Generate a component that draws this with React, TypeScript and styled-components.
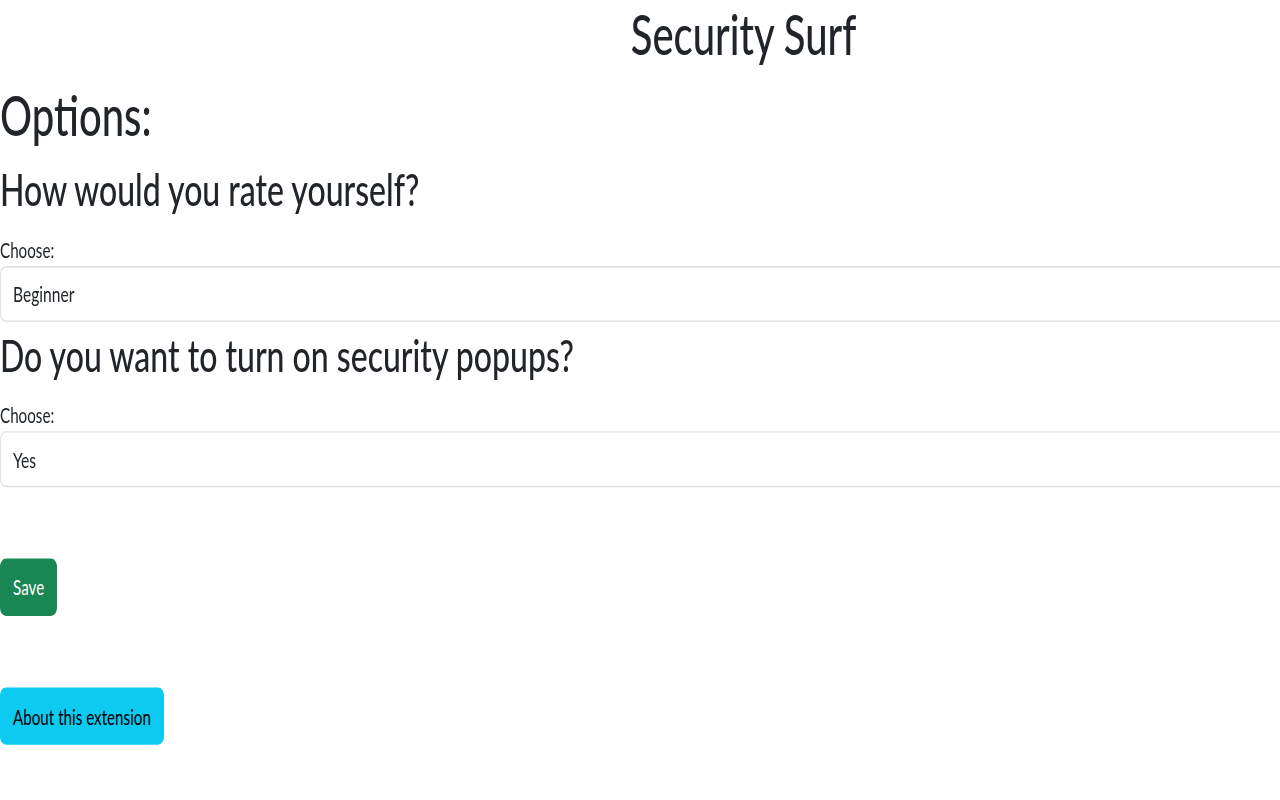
import React from "react";
import styled, { createGlobalStyle } from "styled-components";

const GlobalStyle = createGlobalStyle`
  html {
    overflow: hidden;
    background: #ffffff;
  }
  body {
    margin: 0;
    padding: 0;
    font-family: Lato, "Open Sans", sans-serif;
    color: #212529;
  }
  * { box-sizing: border-box; }
`;

const Frame = styled.div`
  width: 100vw;
  height: 100vh;
  overflow: hidden;
  background: #ffffff;
`;

const Page = styled.main`
  width: 1487px;
  display: flex;
  flex-direction: column;
  align-items: stretch;
  font-family: Lato, "Open Sans", sans-serif;
  color: #212529;
  transform: scaleY(1.4);
  transform-origin: 0 0;
`;

const SiteTitle = styled.h1`
  align-self: center;
  margin: 0;
  font-size: 40px;
  font-weight: 500;
  line-height: 48px;
  text-align: center;
`;

const PageTitle = styled.h1`
  margin: 10.4px 0 9.5px;
  font-size: 40px;
  font-weight: 500;
  line-height: 48px;
`;

const Field = styled.section<{ $top: number }>`
  display: flex;
  flex-direction: column;
  margin-top: ${(p) => p.$top}px;
`;

const Question = styled.h2`
  margin: 0 0 11px;
  font-size: 32px;
  font-weight: 500;
  line-height: 38.4px;
`;

const FieldLabel = styled.label`
  font-size: 15.2px;
  line-height: 24px;
`;

const Select = styled.select`
  appearance: none;
  -webkit-appearance: none;
  width: 100%;
  height: 40.3px;
  padding: 0 36px 0 12px;
  border: 1px solid #dcdfe3;
  border-radius: 6px;
  background: #ffffff;
  font-family: Lato, "Open Sans", sans-serif;
  font-size: 15.6px;
  line-height: 24px;
  color: #212529;
`;

const ActionButton = styled.button<{ $variant: "success" | "info"; $top: number }>`
  align-self: flex-start;
  margin-top: ${(p) => p.$top}px;
  padding: 7.5px 12px;
  border: 1px solid ${(p) => (p.$variant === "success" ? "#198754" : "#0dcaf0")};
  border-radius: 6px;
  background: ${(p) => (p.$variant === "success" ? "#198754" : "#0dcaf0")};
  color: ${(p) => (p.$variant === "success" ? "#ffffff" : "#000000")};
  font-family: Lato, "Open Sans", sans-serif;
  font-size: 15.2px;
  line-height: 24px;
  cursor: pointer;
`;

export default function App() {
  return (
    <>
      <GlobalStyle />
      <Frame>
        <Page>
          <SiteTitle>Security Surf</SiteTitle>
          <PageTitle>Options:</PageTitle>
          <Field $top={0.6}>
            <Question>How would you rate yourself?</Question>
            <FieldLabel htmlFor="level">Choose:</FieldLabel>
            <Select id="level" defaultValue="beginner">
              <option value="beginner">Beginner</option>
              <option value="intermediate">Intermediate</option>
              <option value="expert">Expert</option>
            </Select>
          </Field>
          <Field $top={4.6}>
            <Question>Do you want to turn on security popups?</Question>
            <FieldLabel htmlFor="popups">Choose:</FieldLabel>
            <Select id="popups" defaultValue="yes">
              <option value="yes">Yes</option>
              <option value="no">No</option>
            </Select>
          </Field>
          <ActionButton $variant="success" $top={50.4}>Save</ActionButton>
          <ActionButton $variant="info" $top={51.5}>About this extension</ActionButton>
        </Page>
      </Frame>
    </>
  );
}
